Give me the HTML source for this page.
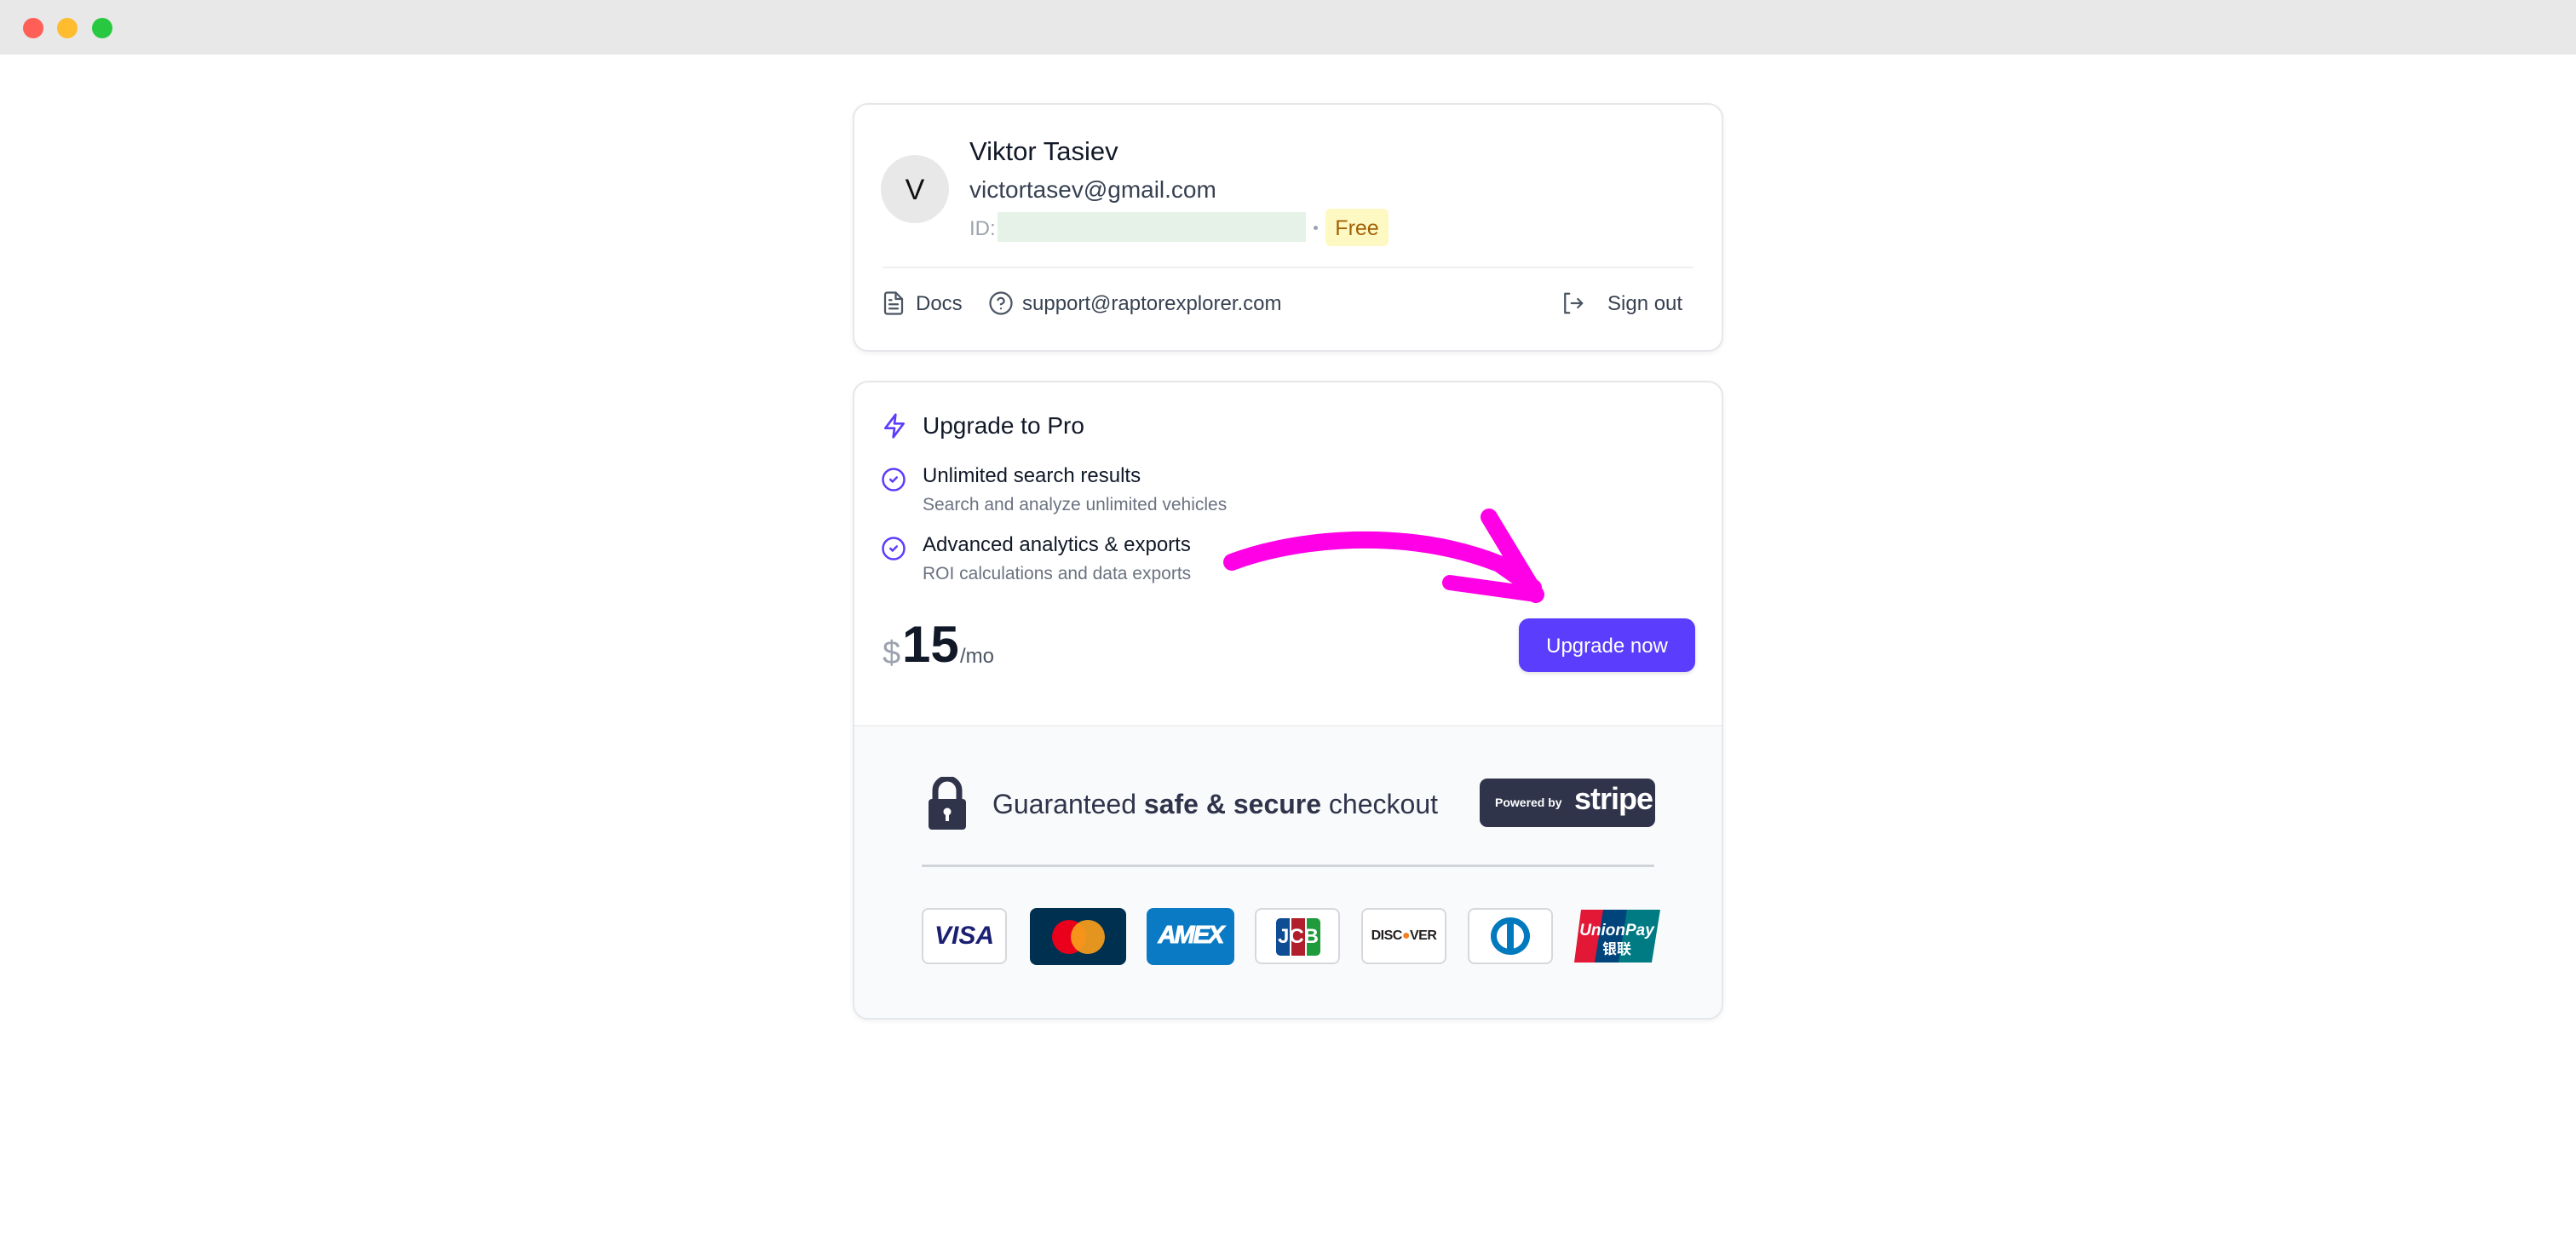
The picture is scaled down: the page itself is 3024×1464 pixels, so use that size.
<!DOCTYPE html>
<html><head><meta charset="utf-8">
<style>
*{margin:0;padding:0;box-sizing:border-box}
html,body{width:3024px;height:1464px;overflow:hidden;background:#fff;font-family:"Liberation Sans",Arial,sans-serif}
.abs{position:absolute}
.bar{left:0;top:0;width:3024px;height:64px;background:#e8e8e8}
.dot{width:24px;height:24px;border-radius:50%;top:21px}
.card{border:2px solid #e5e7eb;border-radius:18px;background:#fff;box-shadow:0 2px 6px rgba(0,0,0,.06);overflow:hidden}
.t{white-space:nowrap;line-height:1}
.pc{border-radius:8px;overflow:hidden}
</style></head><body>
<div class="abs bar"></div>
<div class="abs dot" style="left:27px;background:#ff5f57"></div>
<div class="abs dot" style="left:67px;background:#febc2e"></div>
<div class="abs dot" style="left:108px;background:#28c840"></div>

<!-- card 1 -->
<div class="abs card" style="left:1001px;top:121px;width:1022px;height:292px"></div>
<div class="abs" style="left:1034px;top:182px;width:80px;height:80px;border-radius:50%;background:#e8e8e8"></div>
<div class="abs t" style="left:1034px;top:206px;width:80px;text-align:center;font-size:34px;color:#111">V</div>
<div class="abs t" style="left:1138px;top:162px;font-size:31px;color:#111827">Viktor Tasiev</div>
<div class="abs t" style="left:1138px;top:209px;font-size:28px;color:#374151">victortasev@gmail.com</div>
<div class="abs t" style="left:1138px;top:257px;font-size:24px;color:#9ca3af">ID:</div>
<div class="abs" style="left:1171px;top:249px;width:362px;height:35px;background:#e6f2e8"></div>
<div class="abs" style="left:1542px;top:265px;width:5px;height:5px;border-radius:50%;background:#9ca3af"></div>
<div class="abs" style="left:1556px;top:245px;width:74px;height:44px;border-radius:6px;background:#fef9c3"></div>
<div class="abs t" style="left:1556px;top:256px;width:74px;text-align:center;font-size:25px;color:#a16207">Free</div>
<div class="abs" style="left:1036px;top:313px;width:952px;height:2px;background:#eeeff1"></div>
<svg class="abs" style="left:1034px;top:341px" width="30" height="30" viewBox="0 0 24 24" fill="none" stroke="#4b5563" stroke-width="1.8" stroke-linecap="round" stroke-linejoin="round"><path d="M14 2H6a2 2 0 0 0-2 2v16a2 2 0 0 0 2 2h12a2 2 0 0 0 2-2V8z"/><path d="M14 2v6h6M8 13h8M8 17h8M8 9h2"/></svg>
<div class="abs t" style="left:1075px;top:345px;font-size:24px;color:#374151">Docs</div>
<svg class="abs" style="left:1160px;top:341px" width="30" height="30" viewBox="0 0 24 24" fill="none" stroke="#4b5563" stroke-width="1.8" stroke-linecap="round" stroke-linejoin="round"><circle cx="12" cy="12" r="10"/><path d="M9.1 9a3 3 0 0 1 5.8 1c0 2-3 3-3 3"/><path d="M12 17h.01"/></svg>
<div class="abs t" style="left:1200px;top:345px;font-size:24px;color:#374151">support@raptorexplorer.com</div>
<svg class="abs" style="left:1830px;top:341px" width="32" height="30" viewBox="0 0 24 24" fill="none" stroke="#4b5563" stroke-width="1.8" stroke-linecap="round" stroke-linejoin="round"><path d="M9 3H5v18h4"/><path d="M11 12h10M17 8l4 4-4 4"/></svg>
<div class="abs t" style="left:1887px;top:345px;font-size:24px;color:#374151">Sign out</div>

<!-- card 2 -->
<div class="abs card" style="left:1001px;top:447px;width:1022px;height:750px">
  <div class="abs" style="left:0;top:402px;width:1022px;height:350px;background:#f9fafb;border-top:2px solid #f0f1f3"></div>
</div>
<svg class="abs" style="left:1034px;top:484px" width="32" height="32" viewBox="0 0 24 24" fill="none" stroke="#5b3dfd" stroke-width="2" stroke-linecap="round" stroke-linejoin="round"><path d="M13 2L4 14h8l-1 8 9-12h-8z"/></svg>
<div class="abs t" style="left:1083px;top:486px;font-size:28px;color:#111827">Upgrade to Pro</div>
<svg class="abs" style="left:1034px;top:548px" width="30" height="30" viewBox="0 0 24 24" fill="none" stroke="#5b3dfd" stroke-width="2" stroke-linecap="round" stroke-linejoin="round"><circle cx="12" cy="12" r="10"/><path d="M9 12l2 2 4-4"/></svg>
<div class="abs t" style="left:1083px;top:547px;font-size:24px;color:#111827">Unlimited search results</div>
<div class="abs t" style="left:1083px;top:582px;font-size:21px;color:#6b7280">Search and analyze unlimited vehicles</div>
<svg class="abs" style="left:1034px;top:629px" width="30" height="30" viewBox="0 0 24 24" fill="none" stroke="#5b3dfd" stroke-width="2" stroke-linecap="round" stroke-linejoin="round"><circle cx="12" cy="12" r="10"/><path d="M9 12l2 2 4-4"/></svg>
<div class="abs t" style="left:1083px;top:628px;font-size:24px;color:#111827">Advanced analytics &amp; exports</div>
<div class="abs t" style="left:1083px;top:663px;font-size:21px;color:#6b7280">ROI calculations and data exports</div>
<div class="abs t" style="left:1036px;top:748px;font-size:38px;color:#9ca3af">$</div>
<div class="abs t" style="left:1059px;top:727px;font-size:60px;font-weight:bold;color:#111827">15</div>
<div class="abs t" style="left:1127px;top:759px;font-size:24px;color:#4b5563">/mo</div>
<div class="abs" style="left:1783px;top:726px;width:207px;height:63px;border-radius:12px;background:#5b3dfd;box-shadow:0 2px 4px rgba(0,0,0,.12)"></div>
<div class="abs t" style="left:1783px;top:747px;width:207px;text-align:center;font-size:24px;color:#fff">Upgrade now</div>
<svg class="abs" style="left:0;top:0" width="3024" height="1464" fill="none" stroke="#ff00e6" stroke-linecap="round" stroke-linejoin="round">
<path d="M1446 660 C1520 632 1650 618 1760 662 L1800 690" stroke-width="20"/>
<path d="M1748 607 L1803 698" stroke-width="20"/>
<path d="M1702 684 L1803 698" stroke-width="18"/>
</svg>

<!-- secure -->
<svg class="abs" style="left:1088px;top:912px" width="48" height="62" viewBox="0 0 48 62"><path d="M10 28V16a14 14 0 0 1 28 0v12" fill="none" stroke="#30344b" stroke-width="7"/><rect x="2" y="26" width="44" height="36" rx="4" fill="#30344b"/><circle cx="24" cy="41" r="4.5" fill="#fff"/><rect x="22" y="42" width="4" height="10" fill="#fff"/></svg>
<div class="abs t" style="left:1165px;top:928px;font-size:32px;letter-spacing:0px;color:#30344b">Guaranteed <b>safe &amp; secure</b> checkout</div>
<div class="abs" style="left:1737px;top:914px;width:206px;height:57px;border-radius:9px;background:#30344b"></div>
<div class="abs t" style="left:1755px;top:935px;font-size:14px;color:#fff;font-weight:bold">Powered by</div>
<div class="abs t" style="left:1848px;top:920px;font-size:36px;color:#fff;font-weight:bold;letter-spacing:-1px">stripe</div>
<div class="abs" style="left:1082px;top:1015px;width:860px;height:3px;background:#d1d5db"></div>

<!-- payment cards -->
<div class="abs pc" style="left:1082px;top:1066px;width:100px;height:66px;background:#fff;border:2px solid #d6d8dc"></div>
<div class="abs t" style="left:1082px;top:1084px;width:100px;text-align:center;font-size:30px;font-weight:bold;font-style:italic;color:#1a1f71">VISA</div>
<div class="abs pc" style="left:1209px;top:1066px;width:113px;height:67px;background:#00304f"></div>
<div class="abs" style="left:1235px;top:1080px;width:40px;height:40px;border-radius:50%;background:#eb001b"></div>
<div class="abs" style="left:1257px;top:1080px;width:40px;height:40px;border-radius:50%;background:#f79e1b;opacity:.92"></div>
<div class="abs pc" style="left:1346px;top:1066px;width:103px;height:67px;background:#0b7ac4"></div>
<div class="abs t" style="left:1346px;top:1084px;width:103px;text-align:center;font-size:29px;font-weight:bold;font-style:italic;color:#fff;-webkit-text-stroke:1px #fff;letter-spacing:-2px">AMEX</div>
<div class="abs pc" style="left:1473px;top:1066px;width:100px;height:66px;background:#fff;border:2px solid #d6d8dc"></div>
<div class="abs" style="left:1498px;top:1078px;width:16px;height:44px;border-radius:5px 0 0 5px;background:#0e4c96"></div>
<div class="abs" style="left:1516px;top:1078px;width:16px;height:44px;background:#b11e2c"></div>
<div class="abs" style="left:1534px;top:1078px;width:16px;height:44px;border-radius:0 5px 5px 0;background:#1f9b3c"></div>
<div class="abs t" style="left:1496px;top:1088px;width:56px;text-align:center;font-size:24px;font-weight:bold;color:#fff">JCB</div>
<div class="abs pc" style="left:1598px;top:1066px;width:100px;height:66px;background:#fff;border:2px solid #d6d8dc"></div>
<div class="abs t" style="left:1598px;top:1091px;width:100px;text-align:center;font-size:16px;font-weight:bold;color:#231f20;letter-spacing:-0.5px">DISC<span style="color:#f48120">●</span>VER</div>
<div class="abs pc" style="left:1723px;top:1066px;width:100px;height:66px;background:#fff;border:2px solid #d6d8dc"></div>
<div class="abs" style="left:1750px;top:1077px;width:46px;height:44px;border-radius:50%;border:7px solid #0079be"></div>
<div class="abs" style="left:1769px;top:1084px;width:8px;height:30px;background:#0079be"></div>
<svg class="abs" style="left:1846px;top:1068px" width="103" height="62" viewBox="0 0 103 62"><path d="M10 0h30L30 62H2z" fill="#e21836"/><path d="M36 0h32L58 62H26z" fill="#00447c"/><path d="M64 0h39L93 62H54z" fill="#007b84"/><text x="52" y="30" text-anchor="middle" font-family="Liberation Sans" font-weight="bold" font-style="italic" font-size="19" fill="#fff">UnionPay</text><text x="52" y="52" text-anchor="middle" font-family="Noto Sans CJK SC,sans-serif" font-weight="bold" font-size="17" fill="#fff">银联</text></svg>
</body></html>
